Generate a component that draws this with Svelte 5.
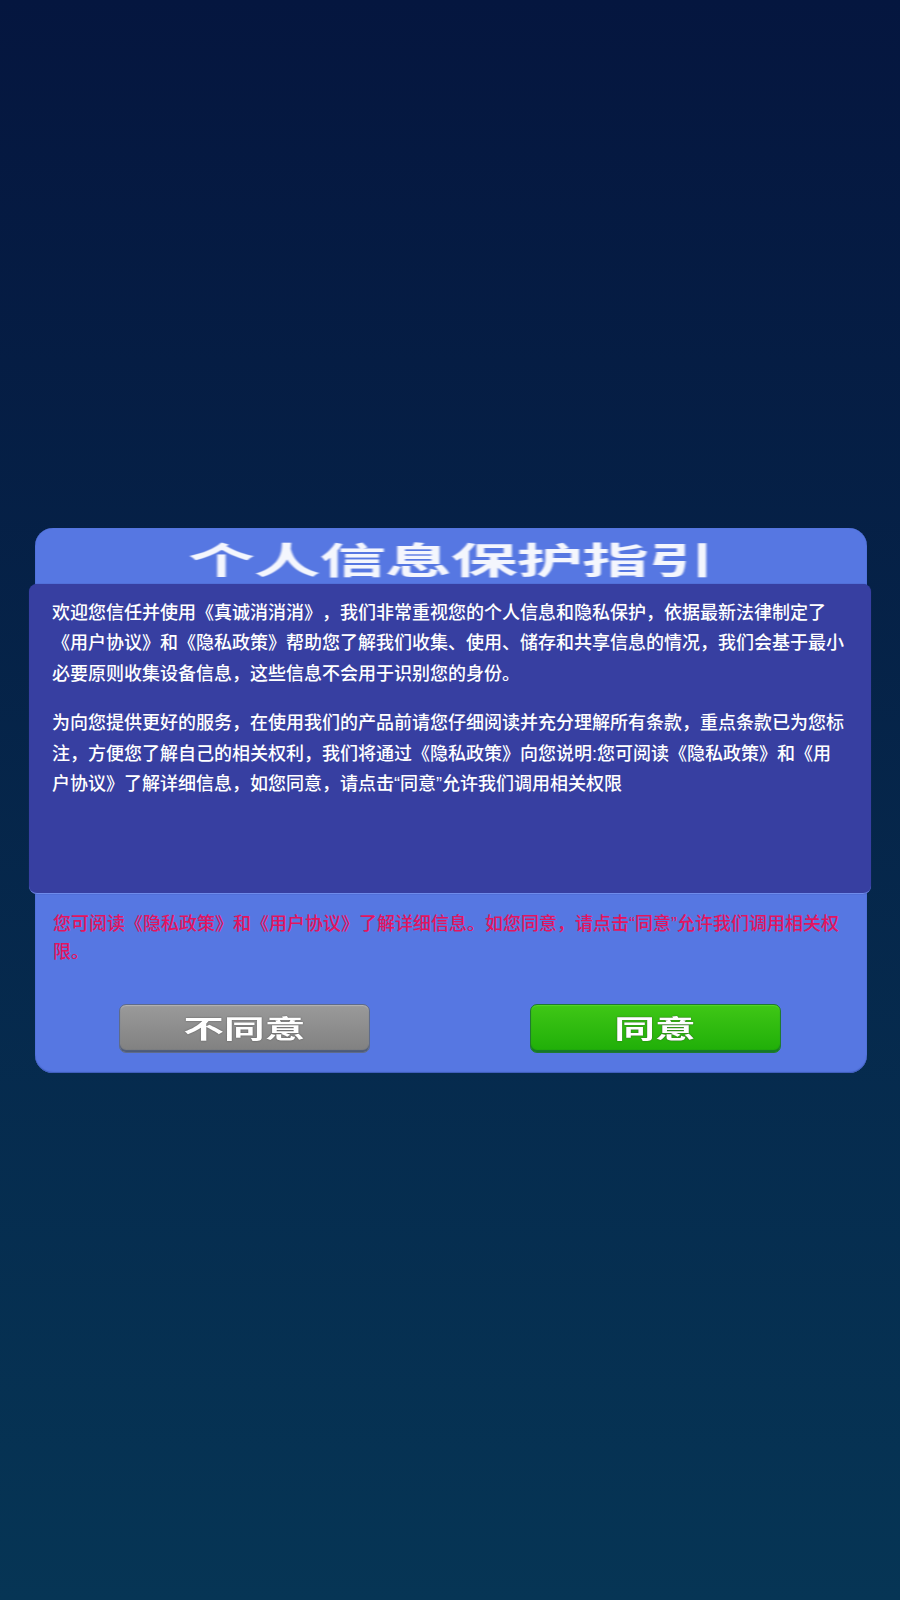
<script>
  const para1 = '欢迎您信任并使用《真诚消消消》，我们非常重视您的个人信息和隐私保护，依据最新法律制定了《用户协议》和《隐私政策》帮助您了解我们收集、使用、储存和共享信息的情况，我们会基于最小必要原则收集设备信息，这些信息不会用于识别您的身份。';
  const para2 = '为向您提供更好的服务，在使用我们的产品前请您仔细阅读并充分理解所有条款，重点条款已为您标注，方便您了解自己的相关权利，我们将通过《隐私政策》向您说明:您可阅读《隐私政策》和《用户协议》了解详细信息，如您同意，请点击“同意”允许我们调用相关权限';
  const notice = '您可阅读《隐私政策》和《用户协议》了解详细信息。如您同意，请点击“同意”允许我们调用相关权限。';
</script>

<div class="page">
  <div class="card">
    <div class="title"><span>个人信息保护指引</span></div>
    <div class="body">
      <p>{para1}</p>
      <p>{para2}</p>
    </div>
    <p class="notice">{notice}</p>
    <div class="actions">
      <button class="btn grey"><span>不同意</span></button>
      <button class="btn green"><span>同意</span></button>
    </div>
  </div>
</div>

<style>
  :global(body) {
    margin: 0;
    background: #04143f;
  }
  .page {
    box-sizing: border-box;
    width: 900px;
    height: 1600px;
    padding-top: 528px;
    background: linear-gradient(180deg, #05163f 0%, #063555 100%);
    font-family: "Liberation Sans", "Noto Sans CJK SC", sans-serif;
    text-spacing-trim: space-all;
    overflow: hidden;
  }
  .card {
    box-sizing: border-box;
    width: 832px;
    height: 545px;
    margin-left: 35px;
    background: #5677e2;
    border-radius: 18px;
    box-shadow: inset 0 0 1px #4a68c8, inset 0 -1px 1px #3f5cb8;
    display: flex;
    flex-direction: column;
  }
  .title {
    height: 56px;
    padding-top: 4px;
    box-sizing: border-box;
    display: flex;
    justify-content: center;
    align-items: center;
    color: #f4f6fd;
    font-size: 36px;
    font-weight: 700;
    white-space: nowrap;
  }
  .title span {
    display: inline-block;
    transform: scale(1.85, 1.02);
    filter: blur(0.6px);
    letter-spacing: -0.5px;
  }
  .body {
    box-sizing: border-box;
    height: 310px;
    margin: 0 -4px 0 -6px;
    padding: 14px 25px 0 23px;
    background: #373fa1;
    border-radius: 8px;
    border-bottom: 1px solid #6f8ceb;
    box-shadow: 0 0 1px #2b3a8c;
    color: #fff;
    font-size: 18px;
    font-weight: 500;
    line-height: 30.4px;
  }
  .body p {
    margin: 0 0 19px;
  }
  .notice {
    margin: 16px 22px 0 18px;
    color: #e3145f;
    font-size: 18px;
    font-weight: 500;
    line-height: 28px;
    height: 56px;
  }
  .actions {
    display: flex;
    justify-content: space-between;
    margin: 38px 86px 0 84px;
  }
  .btn {
    width: 251px;
    height: 49px;
    padding: 0 0 4px;
    border: none;
    border-radius: 7px;
    font-family: inherit;
    font-size: 25px;
    font-weight: 700;
    color: #fff;
    display: flex;
    align-items: center;
    justify-content: center;
    text-shadow: 0 0 1px #333;
  }
  .btn span {
    display: inline-block;
    transform: scaleX(1.63);
    filter: blur(0.4px);
  }
  .grey {
    background: linear-gradient(180deg, #9a9a9a 0%, #808080 100%);
    box-shadow: inset 0 -2px 1px #4c5a78, inset 0 1px 1px #b4b4b4;
    border: 1px solid #5e6b8a;
    box-sizing: border-box;
  }
  .green {
    background: linear-gradient(180deg, #3fc716 0%, #1fae08 100%);
    box-shadow: inset 0 -2px 1px #16772a, inset 0 1px 1px #55d52a;
    border: 1px solid #1f7a30;
    box-sizing: border-box;
  }
</style>
